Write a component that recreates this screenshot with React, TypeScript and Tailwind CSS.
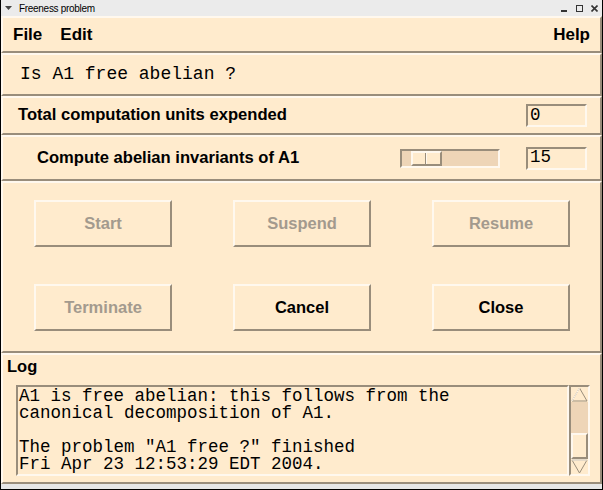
import { ReactNode } from "react";

const raised =
  "border-2 border-t-[#fff8ee] border-l-[#fff8ee] border-b-[#998d7b] border-r-[#998d7b]";
const sunken =
  "border-2 border-t-[#998d7b] border-l-[#998d7b] border-b-[#fff8ee] border-r-[#fff8ee]";

function Panel({ className, children }: { className: string; children?: ReactNode }) {
  return <div className={`${raised} bg-[#ffebcd] ${className}`}>{children}</div>;
}

function Btn({ label, enabled }: { label: string; enabled?: boolean }) {
  return (
    <div
      className={`${raised} w-[138px] h-[47px] flex items-center justify-center font-bold text-[16.5px] ${
        enabled ? "text-black" : "text-[#a39a8e]"
      }`}
    >
      {label}
    </div>
  );
}

function Field({ value }: { value: string }) {
  return (
    <div className={`${sunken} w-[61px] h-[23px] flex items-center pl-[2px] font-['Liberation_Mono'] font-normal text-[17.5px] leading-none`}>
      {value}
    </div>
  );
}

export default function App() {
  return (
    <div className="w-[603px] h-[490px] bg-[#e6e6e6] flex flex-col overflow-hidden font-['Liberation_Sans',sans-serif] text-black border-l border-r border-b border-black">
      {/* title bar */}
      <div className="h-[16px] bg-[#ebebeb] flex items-center text-[10px] pl-[4px] pr-[4px] shrink-0">
        <svg width="7" height="5" viewBox="0 0 7 5" className="mr-[7px]">
          <path d="M0 0H7L3.5 4Z" fill="#444" />
        </svg>
        <span className="tracking-[-0.3px]">Freeness problem</span>
        <div className="ml-auto flex items-center gap-[8px] text-[#333]">
          <svg width="7" height="7" viewBox="0 0 7 7"><rect x="0" y="5" width="6" height="2" fill="#333" /></svg>
          <svg width="7" height="7" viewBox="0 0 7 7"><rect x="0.5" y="0.5" width="6" height="6" fill="none" stroke="#333" /></svg>
          <svg width="7" height="7" viewBox="0 0 7 7"><path d="M0.5 0.5L6.5 6.5M6.5 0.5L0.5 6.5" stroke="#333" strokeWidth="1.6" /></svg>
        </div>
      </div>

      {/* menu */}
      <Panel className="h-[37px] flex items-center pl-[10px] pr-[10px] font-bold text-[17px] shrink-0">
        <span>File</span>
        <span className="ml-[18px]">Edit</span>
        <span className="ml-auto">Help</span>
      </Panel>

      <Panel className="h-[43px] flex items-center pl-[17px] font-['Liberation_Mono'] text-[18px] shrink-0">
        Is A1 free abelian ?
      </Panel>

      <Panel className="h-[39px] flex items-center pl-[15px] pr-[13px] font-bold text-[16.6px] shrink-0">
        <span>Total computation units expended</span>
        <div className="ml-auto">
          <Field value="0" />
        </div>
      </Panel>

      <Panel className="h-[46px] flex items-center pl-[34px] pr-[13px] font-bold text-[16.6px] shrink-0">
        <span>Compute abelian invariants of A1</span>
        <div className={`${sunken} ml-auto w-[100px] h-[19px] bg-[#eed5b7] flex items-center pl-[9px]`}>
          <div className={`${raised} w-[31px] h-[15px] bg-[#ffebcd] flex`}>
            <div className="w-[13px] border-r border-r-[#998d7b] h-full" />
            <div className="flex-1 border-l border-l-[#fff8ee] h-full" />
          </div>
        </div>
        <div className="ml-[26px]">
          <Field value="15" />
        </div>
      </Panel>

      <Panel className="h-[172px] pt-[17px] pl-[31px] shrink-0">
        <div className="grid grid-cols-[138px_138px_138px] gap-x-[61px] gap-y-[37px]">
          <Btn label="Start" />
          <Btn label="Suspend" />
          <Btn label="Resume" />
          <Btn label="Terminate" />
          <Btn label="Cancel" enabled />
          <Btn label="Close" enabled />
        </div>
      </Panel>

      <Panel className="h-[131px] pl-[4px] pt-[1px] shrink-0">
        <div className="font-bold text-[16.5px] leading-[20px]">Log</div>
        <div className="flex mt-[9px] ml-[9px]">
          <div className={`${sunken} w-[553px] h-[91px] pl-[1px] pt-[1px] font-['Liberation_Mono'] text-[17.5px] leading-[17px] whitespace-pre`}>
            {"A1 is free abelian: this follows from the\ncanonical decomposition of A1.\n\nThe problem \"A1 free ?\" finished\nFri Apr 23 12:53:29 EDT 2004."}
          </div>
          <div className={`${sunken} w-[21px] h-[91px] bg-[#eed5b7] flex flex-col`}>
            <svg width="17" height="15" viewBox="0 0 17 15" className="shrink-0">
              <rect width="17" height="15" fill="#ffebcd" />
              <path d="M8.5 1L16 14H1Z" fill="#ffebcd" stroke="#998d7b" strokeWidth="1" />
              <path d="M8.5 1L1 14" stroke="#fff8ee" strokeWidth="1" />
            </svg>
            <div className="flex-1" />
            <div className={`${raised} h-[26px] bg-[#ffebcd] shrink-0`} />
            <svg width="17" height="15" viewBox="0 0 17 15" className="shrink-0">
              <rect width="17" height="15" fill="#ffebcd" />
              <path d="M1 1H16L8.5 14Z" fill="#ffebcd" stroke="#998d7b" strokeWidth="1" />
              <path d="M1 1H16" stroke="#fff8ee" strokeWidth="1" />
            </svg>
          </div>
        </div>
      </Panel>
    </div>
  );
}
